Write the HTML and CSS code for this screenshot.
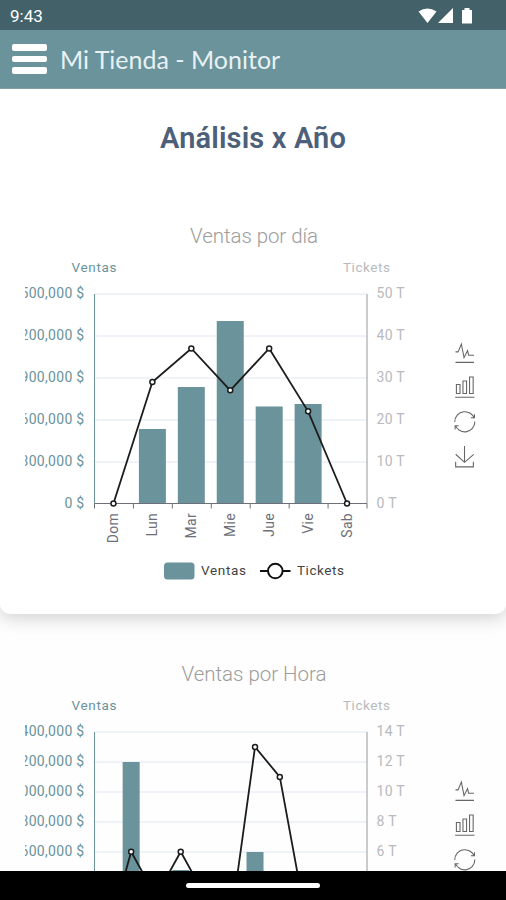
FILE: index.html
```html
<!DOCTYPE html>
<html lang="es">
<head>
<meta charset="UTF-8" />
<meta name="viewport" content="width=device-width,initial-scale=1" />
<title>Mi Tienda - Monitor</title>
<link rel="stylesheet" href="styles.css">
</head>
<body>
<div class="status-bar">
  <span class="clock">9:43</span>
  <svg class="status-icons" width="56" height="18" viewBox="0 0 56 18">
    <path d="M0.5 4.5Q9.5-1.5 18.5 4.5L9.5 16z"/>
    <path d="M35 1v15H20z"/>
    <path d="M44 3h2.500V1h5v2H54v13.500H44z"/>
  </svg>
</div>
<header class="navbar">
  <button class="menu" aria-label="Menú"><span></span><span></span><span></span></button>
  <div class="brand">Mi Tienda - Monitor</div>
</header>
<main>
  <section class="card">
    <h1>Análisis x Año</h1>
    <svg class="chart" id="chartDia" width="456" height="370"></svg>
  </section>
  <section class="card second">
    <svg class="chart" id="chartHora" width="456" height="370"></svg>
  </section>
</main>
<div class="nav-bar"><div class="pill"></div></div>

<script>
const LEFT = 69.5, RIGHT = 342, TOP = 74, BOTTOM = 283.5;
const toolbox = [
  [429, 121.5, "M4.1,28.9h7.1l9.3-22l7.4,38l9.7-19.7l3,12.8h14.9M4.1,58h51.4"],
  [429, 156.3, "M6.7,22.9h10V48h-10V22.9zM24.9,13h10v35h-10V13zM43.2,2h10v46h-10V2zM3.1,58h53.7"],
  [429, 191, "M47,18.9h9.8V8.7M56.3,20.1C52.1,9,40.5,0.6,26.8,2.1C12.6,3.7,1.6,16.2,2.1,30.6M13,41.1H3.1v10.2M3.7,39.9c4.2,11.1,15.8,19.5,29.5,18c14.2-1.6,25.2-14.1,24.7-28.5"],
  [429, 226, "M4.7,22.9L29.3,45.5L54.7,23.4M4.6,43.6L4.6,58L53.8,58L53.8,43.6M29.2,45.1L29.2,0"]
];

function drawChart(id, c) {
  const step = (RIGHT - LEFT) / c.count;
  const px = i => LEFT - 0.5 + step * (i + 0.5);
  const py = v => BOTTOM - (BOTTOM - TOP) * v / c.max;
  let s = `<text class="title" x="229" y="${c.titleY}" textLength="${c.titleWidth}">${c.title}</text>
    <text class="sales name" x="69" y="52" textLength="45">Ventas</text>
    <text class="tickets name" x="341.5" y="52" textLength="47">Tickets</text>`;
  const rows = c.left.length - 1;
  c.left.forEach((label, i) => {
    const y = TOP + (BOTTOM - TOP) * i / rows;
    if (i < rows) s += `<path class="grid" d="M${LEFT} ${Math.round(y)}H${RIGHT}"/>`;
    s += `<text class="sales left" x="59.5" y="${y + 4.3}">${label} $</text>`;
    s += `<text class="tickets right" x="351.5" y="${y + 4.3}">${c.max - c.max / rows * i} T</text>`;
  });
  c.bars.forEach(([i, top]) => {
    s += `<rect class="bar" x="${px(i) - c.barWidth / 2}" y="${top}" width="${c.barWidth}" height="${BOTTOM - top}"/>`;
  });
  s += `<path class="axis-left" d="M${LEFT} ${TOP}V${BOTTOM}"/><path class="axis-right" d="M${RIGHT} ${TOP}V${BOTTOM}"/>`;
  s += `<path class="axis" d="M${LEFT} ${BOTTOM}H${RIGHT}`;
  for (let i = 0; i <= c.count; i++) s += `M${LEFT + step * i} ${BOTTOM}v5`;
  s += `"/>`;
  c.days.forEach((d, i) => {
    s += `<text class="day" transform="translate(${px(i) + 4.5} 293) rotate(-90)">${d}</text>`;
  });
  s += `<polyline class="line" points="${c.values.map((v, i) => px(i) + ',' + py(v)).join(' ')}"/>`;
  c.values.forEach((v, i) => {
    s += `<circle class="dot" cx="${px(i)}" cy="${py(v)}" r="2.5"/>`;
  });
  s += `<rect class="bar" x="139" y="342.5" width="30.5" height="17" rx="3.5"/>
    <text class="legend" x="176" y="355" textLength="45">Ventas</text>
    <path class="legend-line" d="M235 351h30.5"/><circle class="legend-dot" cx="250.3" cy="351" r="7.3"/>
    <text class="legend" x="272" y="355" textLength="47">Tickets</text>`;
  toolbox.forEach(([x, y, d]) => {
    s += `<path class="tool" transform="translate(${x} ${y}) scale(.36)" d="${d}"/>`;
  });
  document.getElementById(id).innerHTML = s;
}

drawChart('chartDia', {
  title: 'Ventas por día', titleWidth: 128, titleY: 23, count: 7, max: 50, barWidth: 27,
  left: ['500,000', '200,000', '900,000', '600,000', '300,000', '0'],
  bars: [[1, 209], [2, 167], [3, 101], [4, 186.5], [5, 184]],
  values: [0, 29, 37, 27, 37, 22, 0],
  days: ['Dom', 'Lun', 'Mar', 'Mie', 'Jue', 'Vie', 'Sab']
});
drawChart('chartHora', {
  title: 'Ventas por Hora', titleWidth: 145, titleY: 23, count: 11, max: 14, barWidth: 17,
  left: ['400,000', '200,000', '000,000', '800,000', '600,000', '400,000', '200,000', '0'],
  bars: [[1, 104], [3, 212], [6, 194]],
  values: [0, 6, 3, 6, 3, 1, 13, 11, 2, 1, 0],
  days: []
});
</script>
</body>
</html>
```
FILE: styles.css
```css
* {
  box-sizing: border-box;
}
body {
  margin: 0;
  height: 100vh;
  display: flex;
  flex-direction: column;
  overflow: hidden;
  background: #fefefe;
  font-family: Roboto, sans-serif;
}
.status-bar {
  flex: 0 0 30px;
  display: flex;
  align-items: center;
  justify-content: space-between;
  padding: 2px 32px 0 10px;
  background: #426168;
  color: #fff;
}
.clock {
  font-size: 17px;
}
.status-icons {
  fill: #fff;
}
.navbar {
  flex: 0 0 59px;
  display: flex;
  align-items: center;
  gap: 13px;
  padding-left: 12px;
  background: #6a939b;
  border-bottom: 1px solid #7f9fa5;
}
.menu {
  display: flex;
  flex-direction: column;
  gap: 5px;
  width: 35px;
  padding: 0;
  border: none;
  background: none;
}
.menu span {
  height: 6.5px;
  border-radius: 2px;
  background: #fff;
}
.brand {
  font-family: Lato, sans-serif;
  font-size: 25px;
  color: #e8f1f4;
}
main {
  flex: 1;
  min-height: 0;
  overflow: hidden;
}
.card {
  height: 525px;
  padding: 0 25px;
  border-radius: 0 0 10px 10px;
  background: #fff;
  box-shadow: 0 4px 18px rgba(0,0,0,0.19);
}
.card.second {
  padding-top: 44px;
  background: none;
  box-shadow: none;
}
h1 {
  margin: 0;
  height: 131px;
  padding-top: 31px;
  line-height: 36px;
  text-align: center;
  font-size: 29px;
  font-weight: 600;
  letter-spacing: 0.15px;
  color: #4d6079;
}
.chart {
  display: block;
  overflow: hidden;
  font-size: 13.5px;
}
.title {
  font-size: 20.5px;
  font-weight: 300;
  text-anchor: middle;
  fill: #9c9c9c;
}
.name {
  text-anchor: middle;
}
.sales {
  fill: #6a939b;
}
.left {
  font-size: 14px;
  text-anchor: end;
  letter-spacing: 0.3px;
}
.right {
  font-size: 14px;
  letter-spacing: 0.3px;
}
.tickets {
  fill: #b8babd;
}
.grid {
  stroke: #e0e6f1;
}
.bar {
  fill: #6a939b;
}
.axis-left {
  stroke: #6a939b;
}
.axis-right {
  stroke: #b8babd;
  stroke-width: 1.5;
}
.axis {
  fill: none;
  stroke: #6e7079;
}
.day {
  fill: #6e7079;
  font-size: 14px;
  letter-spacing: 0.3px;
  text-anchor: end;
}
.line {
  fill: none;
  stroke: #1c1c1c;
  stroke-width: 1.8;
}
.dot {
  fill: #fff;
  stroke: #1c1c1c;
  stroke-width: 1.5;
}
.legend {
  fill: #444;
}
.legend-line {
  stroke: #111;
  stroke-width: 2;
}
.legend-dot {
  fill: #fff;
  stroke: #111;
  stroke-width: 2;
}
.tool {
  fill: none;
  stroke: #666;
  stroke-width: 3;
}
.nav-bar {
  flex: 0 0 29px;
  display: flex;
  justify-content: center;
  align-items: center;
  padding-right: 0;
  background: #000;
}
.pill {
  width: 134px;
  height: 5px;
  border-radius: 3px;
  background: #fff;
}
```
